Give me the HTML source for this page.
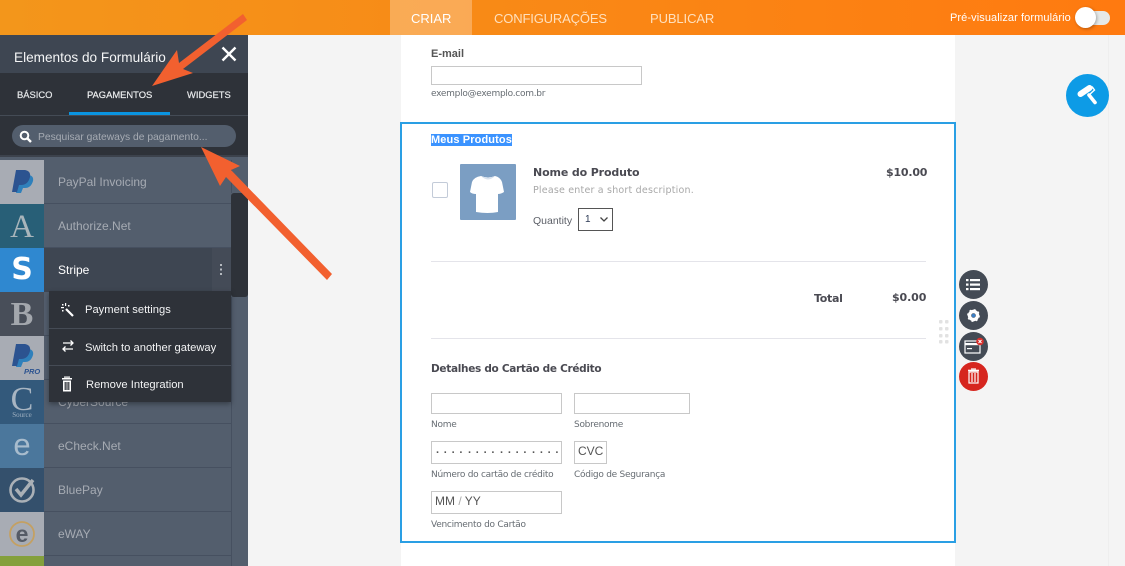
<!DOCTYPE html>
<html><head><meta charset="utf-8"><style>
html,body{margin:0;padding:0;width:1125px;height:566px;overflow:hidden}
#w{position:relative;width:1125px;height:566px;overflow:hidden;background:#f4f4f4;font-family:"Liberation Sans",sans-serif}
.a{position:absolute;white-space:nowrap}
.d{font-family:"DejaVu Sans",sans-serif}
.row{position:absolute;left:0;width:231px;height:43px;background:#535e6d;border-bottom:1px solid #465060}
.tile{position:absolute;left:0;top:0;width:44px;height:44px;text-align:center;font-family:"Liberation Serif",serif;color:#a8adb5}
.name{position:absolute;left:58px;top:15px;font-size:12px;color:#a6abb3}
.inp{position:absolute;border:1px solid #c8c8c8;background:#fff;box-sizing:border-box}
.lab{position:absolute;font-size:9px;color:#666c72;white-space:nowrap;font-family:"DejaVu Sans",sans-serif;letter-spacing:-.27px}
.rb{position:absolute;left:959px;width:29px;height:29px;border-radius:50%;background:#444b55}
.tab{position:absolute;top:89px;font-size:9.4px;white-space:nowrap;color:#e6e8ea;-webkit-text-stroke:.2px #e6e8ea}
.pop{position:absolute;font-size:11.2px;color:#f2f3f4;white-space:nowrap}
</style></head><body><div id="w">

<!-- header -->
<div class="a" style="left:0;top:0;width:1125px;height:35px;background:linear-gradient(90deg,#f3961b,#ff7a10)"></div>
<div class="a" style="left:390px;top:0;width:82px;height:35px;background:rgba(255,255,255,.27)"></div>
<div class="a" style="left:411px;top:11px;font-size:13px;color:#fff">CRIAR</div>
<div class="a" style="left:494px;top:11px;font-size:13px;color:#ffe0bd;letter-spacing:-.15px">CONFIGURAÇÕES</div>
<div class="a" style="left:650px;top:11px;font-size:13px;color:#ffe0bd;letter-spacing:-.1px">PUBLICAR</div>
<div class="a" style="left:950px;top:12px;font-size:11px;color:#fff;letter-spacing:.09px">Pré-visualizar formulário</div>
<div class="a" style="left:1080px;top:11px;width:30px;height:14px;border-radius:7px;background:#e6e9e8"></div>
<div class="a" style="left:1075px;top:7px;width:21px;height:21px;border-radius:50%;background:#fff;box-shadow:1px 1px 3px rgba(0,0,0,.3)"></div>

<!-- form -->
<div class="a" style="left:401px;top:35px;width:554px;height:531px;background:#fff"></div>
<div class="a" style="left:1108px;top:35px;width:1px;height:531px;background:#eeeeee"></div>
<div class="a" style="left:431px;top:48px;font-size:11px;font-weight:bold;color:#555">E-mail</div>
<div class="inp" style="left:431px;top:66px;width:211px;height:19px"></div>
<div class="lab" style="left:431px;top:89px">exemplo@exemplo.com.br</div>

<div class="a" style="left:400px;top:122px;width:556px;height:421px;border:2px solid #2a9fe4;box-sizing:border-box"></div>
<div class="a" style="left:431px;top:134px;height:12px;line-height:12px;font-size:11px;font-weight:bold;color:#fff;background:#3b93ff;letter-spacing:.12px">Meus Produtos</div>
<div class="a" style="left:432px;top:182px;width:16px;height:16px;border:1px solid #c3cbd8;border-radius:2px;box-sizing:border-box"></div>
<div class="a" style="left:460px;top:164px;width:56px;height:56px;background:#7b9ec3;border-radius:1px"></div>
<svg class="a" style="left:460px;top:164px" width="56" height="56"><path d="M21 12 Q28 15 35 12 Q40 13 42 18 L44 28 Q41 30 38 30 L38 48 Q28 50 16 48 L16 30 Q12 30 10 28 L12 18 Q14 13 21 12 Z" fill="#fff"/><path d="M21 12 Q28 15 35 12 Q28 19 21 12 Z" fill="#d8e2ee"/></svg>
<div class="a d" style="left:533px;top:166px;font-size:11px;font-weight:bold;color:#4a4a52;letter-spacing:-.13px">Nome do Produto</div>
<div class="a d" style="left:533px;top:185px;font-size:9.5px;color:#a8a8a8;letter-spacing:.2px">Please enter a short description.</div>
<div class="a" style="left:533px;top:215px;font-size:10.5px;color:#5d6068">Quantity</div>
<div class="a" style="left:578px;top:208px;width:35px;height:23px;border:1px solid #555;box-sizing:border-box"></div>
<div class="a" style="left:585px;top:214px;font-size:10px;color:#2d3a55">1</div>
<svg class="a" style="left:599px;top:216px" width="10" height="8"><path d="M1.5 1.5 L5 5 L8.5 1.5" fill="none" stroke="#444" stroke-width="1.3"/></svg>
<div class="a d" style="left:886px;top:166px;font-size:11px;font-weight:bold;color:#4a4a52;letter-spacing:-.2px">$10.00</div>
<div class="a" style="left:431px;top:261px;width:495px;height:1px;background:#e4e4ea"></div>
<div class="a d" style="left:814px;top:292px;font-size:11px;font-weight:bold;color:#4a4a52;letter-spacing:-.3px">Total</div>
<div class="a d" style="left:892px;top:291px;font-size:11px;font-weight:bold;color:#4a4a52;letter-spacing:-.1px">$0.00</div>
<div class="a" style="left:431px;top:338px;width:495px;height:1px;background:#e4e4ea"></div>
<div class="a d" style="left:431px;top:363px;font-size:10.5px;font-weight:bold;color:#4a4a52;letter-spacing:-.3px">Detalhes do Cartão de Crédito</div>

<div class="inp" style="left:431px;top:393px;width:131px;height:21px"></div>
<div class="inp" style="left:574px;top:393px;width:116px;height:21px"></div>
<div class="lab" style="left:431px;top:420px">Nome</div>
<div class="lab" style="left:574px;top:420px">Sobrenome</div>
<div class="inp" style="left:431px;top:441px;width:131px;height:23px"></div>
<div class="a" style="left:436px;top:447px;font-size:11px;font-weight:bold;color:#555;letter-spacing:4.14px;word-spacing:-6.4px">···· ···· ···· ····</div>
<div class="inp" style="left:574px;top:441px;width:33px;height:23px"></div>
<div class="a" style="left:578px;top:444px;font-size:12px;color:#555">CVC</div>
<div class="lab" style="left:431px;top:470px">Número do cartão de crédito</div>
<div class="lab" style="left:574px;top:470px">Código de Segurança</div>
<div class="inp" style="left:431px;top:491px;width:131px;height:23px"></div>
<div class="a" style="left:435px;top:494px;font-size:12px;color:#555">MM <span style="color:#aaa">/</span> YY</div>
<div class="lab" style="left:431px;top:520px">Vencimento do Cartão</div>

<!-- drag dots -->
<svg class="a" style="left:938px;top:319px" width="12" height="26"><g fill="#e2e2e2"><rect x="1" y="1" width="3.5" height="3.5" rx="1"/><rect x="7" y="1" width="3.5" height="3.5" rx="1"/><rect x="1" y="8" width="3.5" height="3.5" rx="1"/><rect x="7" y="8" width="3.5" height="3.5" rx="1"/><rect x="1" y="15" width="3.5" height="3.5" rx="1"/><rect x="7" y="15" width="3.5" height="3.5" rx="1"/><rect x="1" y="21" width="3.5" height="3.5" rx="1"/><rect x="7" y="21" width="3.5" height="3.5" rx="1"/></g></svg>

<!-- right buttons -->
<div class="rb" style="top:270px"></div>
<svg class="a" style="left:959px;top:270px" width="29" height="29"><g fill="#fff"><rect x="7" y="9" width="2.5" height="2.2"/><rect x="7" y="13.5" width="2.5" height="2.2"/><rect x="7" y="18" width="2.5" height="2.2"/><rect x="11" y="9" width="10" height="2.2"/><rect x="11" y="13.5" width="10" height="2.2"/><rect x="11" y="18" width="10" height="2.2"/></g></svg>
<div class="rb" style="top:301px"></div>
<svg class="a" style="left:959px;top:301px" width="29" height="29"><circle cx="14.5" cy="14.5" r="4" fill="none" stroke="#fff" stroke-width="3.4"/><circle cx="14.5" cy="14.5" r="5.6" fill="none" stroke="#fff" stroke-width="1.6" stroke-dasharray="2 2.4"/><circle cx="14.5" cy="14.5" r="1.8" fill="#3a80c8"/></svg>
<div class="rb" style="top:332px"></div>
<svg class="a" style="left:959px;top:332px" width="29" height="29"><rect x="6" y="9" width="15" height="12" fill="none" stroke="#fff" stroke-width="1.2"/><rect x="6" y="11" width="15" height="2.2" fill="#fff"/><rect x="8" y="16" width="5" height="1.2" fill="#fff"/><circle cx="21" cy="9.5" r="3.8" fill="#d9302c"/><path d="M19.5 8 L22.5 11 M22.5 8 L19.5 11" stroke="#fff" stroke-width="1"/></svg>
<div class="rb" style="top:362px;background:#d6261f"></div>
<svg class="a" style="left:959px;top:362px" width="29" height="29"><g fill="none" stroke="#fff"><path d="M9 8.5 H20" stroke-width="1.6"/><path d="M12 7 H17" stroke-width="1.2"/><rect x="10" y="10" width="9" height="11" stroke-width="1.2"/><path d="M13 11 V20 M16 11 V20" stroke-width="1.2"/></g></svg>

<!-- blue roller -->
<div class="a" style="left:1066px;top:74px;width:43px;height:43px;border-radius:50%;background:#0d9be6"></div>
<svg class="a" style="left:1066px;top:74px" width="43" height="43"><path d="M14.5 20 L23.5 14" stroke="#fff" stroke-width="6" stroke-linecap="round" fill="none"/><path d="M26 12.5 L28.5 16 L23 21" stroke="#fff" stroke-width="1.4" fill="none"/><path d="M23 21 L29 28.5" stroke="#fff" stroke-width="3.6" stroke-linecap="round" fill="none"/></svg>

<!-- sidebar -->
<div class="a" style="left:0;top:35px;width:248px;height:531px;background:#535e6d"></div>
<div class="a" style="left:0;top:35px;width:248px;height:38px;background:#3e4652"></div>
<div class="a" style="left:14px;top:50px;font-size:13.6px;color:#f4f5f6">Elementos do Formulário</div>
<svg class="a" style="left:221px;top:46px" width="16" height="16"><path d="M1.5 1.5 L14.5 14.5 M14.5 1.5 L1.5 14.5" stroke="#fff" stroke-width="2.4"/></svg>
<div class="a" style="left:0;top:73px;width:248px;height:43px;background:#2e3239;border-bottom:1px solid #444b55;box-sizing:border-box"></div>
<div class="tab" style="left:17px">BÁSICO</div>
<div class="tab" style="left:87px;color:#f2f3f4">PAGAMENTOS</div>
<div class="tab" style="left:187px">WIDGETS</div>
<div class="a" style="left:69px;top:112px;width:101px;height:3px;background:#0a94e0"></div>
<div class="a" style="left:0;top:116px;width:248px;height:41px;background:#2e3239;border-bottom:2px solid #3c424c;box-sizing:border-box"></div>
<div class="a" style="left:12px;top:125px;width:224px;height:22px;border-radius:11px;background:#535e6d"></div>
<svg class="a" style="left:19px;top:130px" width="14" height="14"><circle cx="5.5" cy="5.5" r="3.8" fill="none" stroke="#fff" stroke-width="2"/><path d="M8.5 8.5 L12 12" stroke="#fff" stroke-width="2.4"/></svg>
<div class="a" style="left:38px;top:132px;font-size:10.3px;color:#a6abb3">Pesquisar gateways de pagamento...</div>
<div class="a" style="left:0;top:157px;width:248px;height:3px;background:#535e6d"></div>

<div class="row" style="top:160px"><div class="tile" style="background:#a8acb4"></div><div class="name">PayPal Invoicing</div></div>
<div class="row" style="top:204px"><div class="tile" style="background:#285f77;font-size:33px;line-height:47px;color:#a9b5bb">A</div><div class="name">Authorize.Net</div></div>
<div class="row" style="top:248px;background:#3e4652;border-color:#3e4652"><div class="tile" style="background:#2f88d0;font-family:'DejaVu Sans',sans-serif;font-weight:bold;font-size:30px;line-height:44px;color:#fff">S</div><div class="name" style="color:#fff">Stripe</div><div class="a" style="left:212px;top:0;width:19px;height:44px;background:#444b57"></div><svg class="a" style="left:219px;top:15px" width="5" height="14"><g fill="#b5bac0"><rect x="1" y="1" width="2" height="2"/><rect x="1" y="5.5" width="2" height="2"/><rect x="1" y="10" width="2" height="2"/></g></svg></div>
<div class="row" style="top:292px"><div class="tile" style="background:#484e59;font-size:34px;font-weight:bold;line-height:46px;color:#a3a7ad">B</div></div>
<div class="row" style="top:336px"><div class="tile" style="background:#a8acb4"></div></div>
<div class="row" style="top:380px"><div class="tile" style="background:#33597b;font-size:34px;line-height:39px;color:#a8b5c2">C<div class="a" style="left:0;width:44px;top:30px;font-size:7px;line-height:10px;color:#9fb0c0;text-align:center">Source</div></div><div class="name">CyberSource</div></div>
<div class="row" style="top:424px"><div class="tile" style="background:#4b779c;font-family:'Liberation Sans',sans-serif;font-size:31px;line-height:42px;color:#a8bccd">e</div><div class="name">eCheck.Net</div></div>
<div class="row" style="top:468px"><div class="tile" style="background:#34506c"></div><div class="name">BluePay</div></div>
<svg class="a" style="left:0;top:468px" width="44" height="44"><circle cx="22" cy="22" r="11.5" fill="none" stroke="#aab0b6" stroke-width="2.6"/><path d="M16 21 L21 27 L33 12" fill="none" stroke="#aab0b6" stroke-width="3.5"/></svg>
<div class="row" style="top:512px"><div class="tile" style="background:#a8acb4"></div><div class="name">eWAY</div></div>
<svg class="a" style="left:0;top:512px" width="44" height="44"><circle cx="22" cy="22" r="12" fill="none" stroke="#c4a062" stroke-width="1.8"/><text x="22" y="30" text-anchor="middle" font-family="Liberation Sans" font-weight="bold" font-size="23" fill="#555b66">e</text></svg>
<div class="row" style="top:556px;height:10px;border:0"><div class="tile" style="background:#84a03c;height:10px"></div></div>

<!-- paypal logos -->
<svg class="a" style="left:0;top:160px" width="44" height="44"><path d="M20 15 H29 Q34 16 33 21 Q31 28 25 28 H23 L21 33 H16 Z" fill="#2f80bb"/><path d="M16 10 H25 Q31 11 30 17 Q28 25 21 25 H19 L17 32 H12 Z" fill="#2c5390"/></svg>
<svg class="a" style="left:0;top:336px" width="44" height="44"><path d="M20 13 H29 Q34 14 33 19 Q31 26 25 26 H23 L21 31 H16 Z" fill="#2f80bb"/><path d="M16 8 H25 Q31 9 30 15 Q28 23 21 23 H19 L17 30 H12 Z" fill="#2c5390"/><text x="24" y="38" font-family="Liberation Sans" font-weight="bold" font-style="italic" font-size="7.5" fill="#2c5390">PRO</text></svg>

<!-- scrollbar -->
<div class="a" style="left:231px;top:193px;width:17px;height:104px;background:#2e3239;border-radius:3px 0 3px 3px"></div>
<div class="a" style="left:231px;top:160px;width:1px;height:33px;background:#465060"></div>
<div class="a" style="left:231px;top:297px;width:1px;height:269px;background:#465060"></div>

<!-- popup -->
<div class="a" style="left:49px;top:291px;width:182px;height:111px;background:#2e3239;box-shadow:0 2px 5px rgba(0,0,0,.35)"></div>
<div class="a" style="left:49px;top:328px;width:182px;height:1px;background:#454b55"></div>
<div class="a" style="left:49px;top:365px;width:182px;height:1px;background:#454b55"></div>
<div class="pop" style="left:85px;top:304px">Payment settings</div>
<div class="pop" style="left:85px;top:342px">Switch to another gateway</div>
<div class="pop" style="left:86px;top:379px">Remove Integration</div>
<svg class="a" style="left:60px;top:302px" width="16" height="16"><path d="M6 7 L13 14" stroke="#fff" stroke-width="2.2"/><g fill="#fff"><rect x="5" y="1" width="1.2" height="3"/><rect x="1" y="5" width="3" height="1.2"/><rect x="2" y="2" width="1.5" height="1.5"/><rect x="8" y="3" width="1.5" height="1.5"/><rect x="2" y="8" width="1.5" height="1.5"/></g></svg>
<svg class="a" style="left:60px;top:339px" width="16" height="14"><g fill="none" stroke="#fff" stroke-width="1.3"><path d="M3 4 H13 M10.5 1.5 L13 4 L10.5 6.5"/><path d="M13 10 H3 M5.5 7.5 L3 10 L5.5 12.5"/></g></svg>
<svg class="a" style="left:61px;top:376px" width="14" height="17"><g fill="#fff"><rect x="1" y="2" width="10" height="1.5"/><rect x="3" y="0.5" width="6" height="1.2"/><path d="M2 4.5 H10 V15.5 H2 Z M3.6 6 V14 H4.8 V6 Z M5.4 6 V14 H6.6 V6 Z M7.2 6 V14 H8.4 V6 Z" fill-rule="evenodd"/></g></svg>

<!-- arrows -->
<svg class="a" style="left:0;top:0" width="340" height="290"><g fill="#f2602f"><path d="M152 86 L177 50 L179 63 L243 14 L247 20 L183 69 L193 73 Z"/><path d="M201 147 L240 166 L231 170 L332 274 L327 280 L226 177 L220 186 Z"/></g></svg>
</div></body></html>
